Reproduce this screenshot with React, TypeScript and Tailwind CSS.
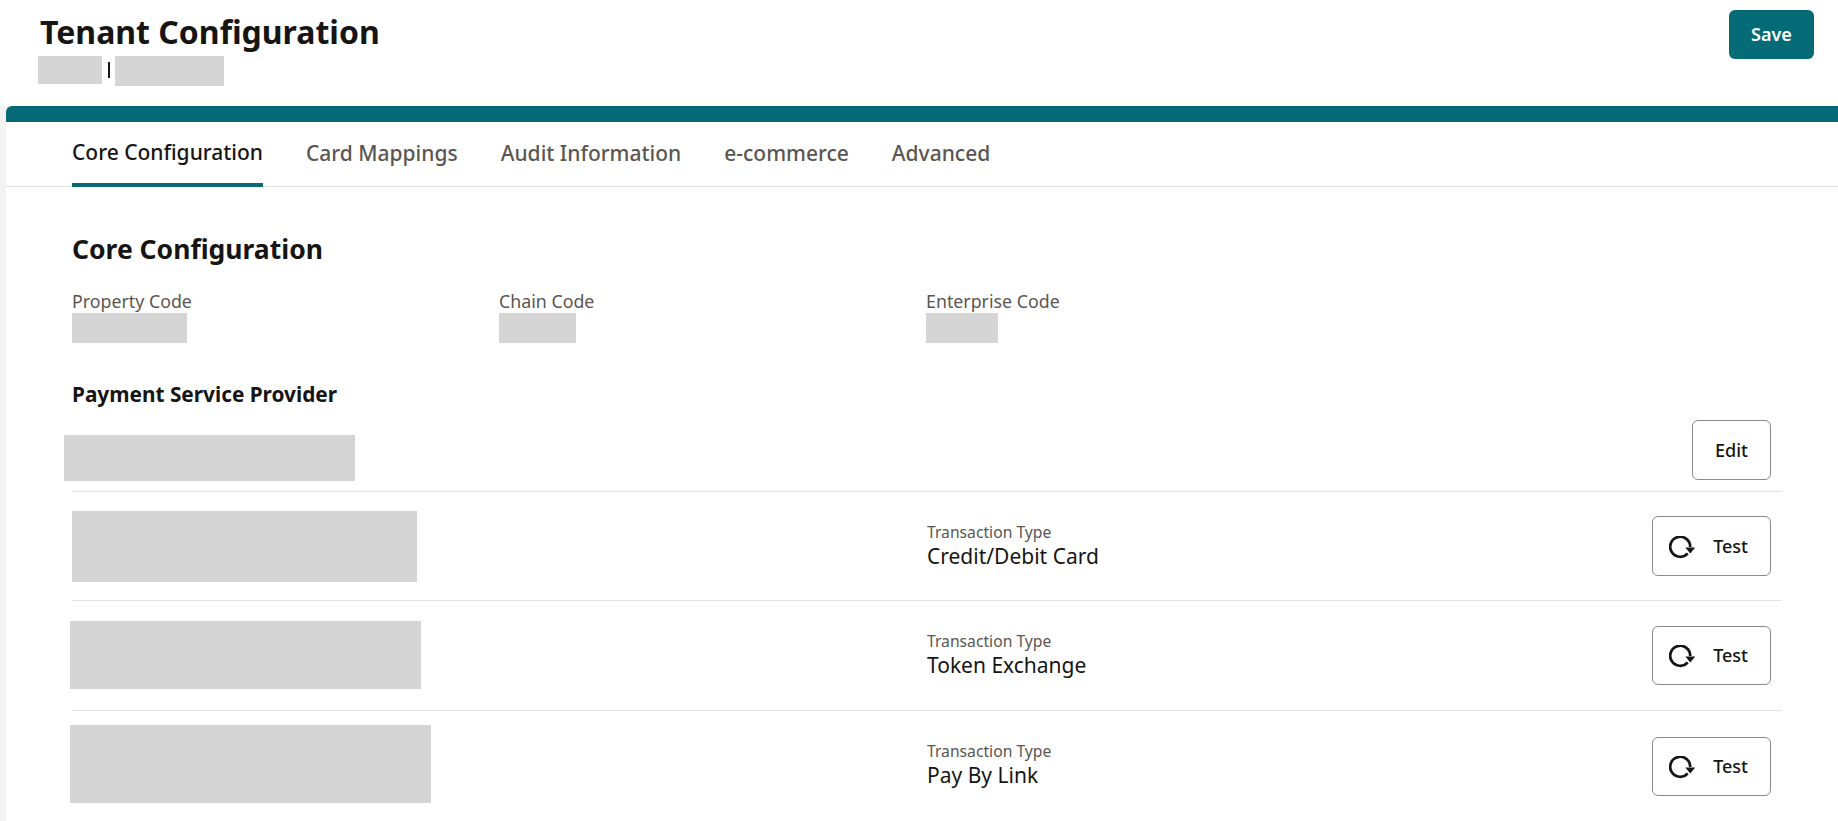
const TestIcon = () => (
  <svg width="26" height="24" viewBox="0 0 26 24" fill="none" className="shrink-0 mt-[3px]">
    <path d="M18.700 17.400A10 10 0 1 1 21.200 11" stroke="#161513" strokeWidth="2.700" />
    <path d="M16.300 11.500h10l-5 6z" fill="#161513" />
  </svg>
);

const Redacted = ({ className }: { className: string }) => <div className={`bg-[#d5d5d5] ${className}`} />;

const tabs = ["Core Configuration", "Card Mappings", "Audit Information", "e-commerce", "Advanced"];

const providers = [
  { row: "h-[109px]", box: "w-[345px] h-[71px]", text: "", btn: "h-[60px]", type: "Credit/Debit Card" },
  { row: "h-[110px]", box: "ml-[-2px] w-[351px] h-[68px] mb-[1px]", text: "", btn: "h-[59px]", type: "Token Exchange" },
  { row: "h-[110px]", box: "ml-[-2px] w-[361px] h-[78px] mb-[4px]", text: "mb-[2px]", btn: "h-[59px]", type: "Pay By Link" },
];

const App = () => {
  return (
    <div className="w-[1838px] h-[821px] overflow-hidden bg-white text-[#161513] font-['Noto_Sans',sans-serif]">
      <header className="flex justify-between h-[106px] pl-[38px] pr-[24px]">
        <div>
          <h1 className="pl-[2px] pt-[12px] text-[32px] leading-[40px] font-bold">Tenant Configuration</h1>
          <div className="flex items-start mt-[4px]">
            <Redacted className="w-[64px] h-[28px]" />
            <span className="w-[2px] h-[16px] mt-[6px] ml-[6px] bg-[#161513]" />
            <Redacted className="w-[109px] h-[30px] ml-[5px]" />
          </div>
        </div>
        <button className="w-[85px] h-[49px] mt-[10px] rounded-[6px] bg-[#056c77] text-white text-[18px] font-semibold">
          Save
        </button>
      </header>

      <div className="bg-[#f3f3f3] pl-[6px]">
        <main className="bg-white rounded-tl-[6px] border-t-[16px] border-[#056c77] h-[715px]">
          <nav className="flex gap-[43px] h-[65px] pl-[66px] border-b border-[#e2e2e2]">
            {tabs.map((tab, i) => (
              <div
                key={tab}
                className={`flex items-center text-[21px] font-medium ${
                  i === 0 ? "text-[#161513] border-b-[4px] border-[#056c77] mb-[-1px]" : "text-[#5b5652]"
                }`}
              >
                {tab}
              </div>
            ))}
          </nav>

          <section className="pl-[66px] w-[1776px]">
            <h2 className="mt-[45px] text-[26.500px] leading-[34px] font-bold">Core Configuration</h2>

            <div className="grid grid-cols-[427px_427px_427px] mt-[23px]">
              {[
                { label: "Property Code", w: "w-[115px]" },
                { label: "Chain Code", w: "w-[77px]" },
                { label: "Enterprise Code", w: "w-[72px]" },
              ].map((f) => (
                <div key={f.label}>
                  <div className="text-[17.800px] leading-[24px] text-[#5b5652]">{f.label}</div>
                  <Redacted className={`${f.w} h-[30px]`} />
                </div>
              ))}
            </div>

            <h3 className="mt-[37px] text-[20.800px] leading-[28px] font-bold">Payment Service Provider</h3>

            <div className="flex justify-between items-start h-[73px] mt-[11px] pr-[11px] border-b border-[#e2e2e2]">
              <Redacted className="ml-[-8px] mt-[16px] w-[291px] h-[46px]" />
              <button className="w-[79px] h-[60px] mt-[1px] rounded-[6px] border border-[#8a8a8a] text-[18px] font-medium">
                Edit
              </button>
            </div>

            {providers.map((p) => (
              <div key={p.type} className={`flex items-center ${p.row} pr-[11px] border-b border-[#e2e2e2] last:border-b-0`}>
                <div className="w-[855px]">
                  <Redacted className={p.box} />
                </div>
                <div className={`flex-1 ${p.text}`}>
                  <div className="text-[15.700px] leading-[19px] text-[#5b5652]">Transaction Type</div>
                  <div className="text-[21px] leading-[28px]">{p.type}</div>
                </div>
                <button className={`flex items-center justify-between w-[119px] ${p.btn} pl-[16px] pr-[22px] rounded-[6px] border border-[#8a8a8a] text-[18px] font-medium`}>
                  <TestIcon />
                  Test
                </button>
              </div>
            ))}
          </section>
        </main>
      </div>
    </div>
  );
};

export default App;
